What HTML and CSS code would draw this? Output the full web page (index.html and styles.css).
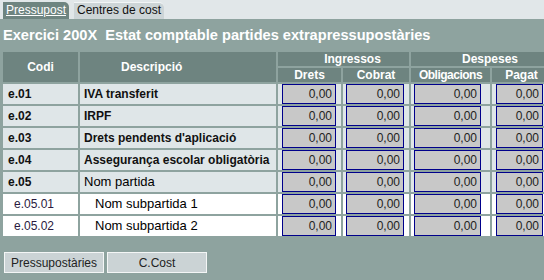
FILE: index.html
```html
<!DOCTYPE html>
<html lang="ca">
<head>
    <meta charset="UTF-8">
    <meta name="viewport" content="width=device-width, initial-scale=1.0">
    <title>Partides extrapressupostàries</title>
    <link rel="stylesheet" href="styles.css">
</head>
<body>
    <div class="tabbar">
        <span class="tab tab-active"><u>Pressupost</u></span>
        <span class="tab tab-other">Centres de cost</span>
    </div>
    <div class="main">
        <h1 class="title">Exercici 200X&nbsp; Estat comptable partides extrapressupostàries</h1>
        <table class="grid">
            <colgroup>
                <col class="c-codi">
                <col class="c-desc">
                <col class="c-drets">
                <col class="c-cobrat">
                <col class="c-oblig">
                <col class="c-pagat">
            </colgroup>
            <thead>
                <tr class="hrow">
                    <th rowspan="2">Codi</th>
                    <th rowspan="2" class="h-desc">Descripció</th>
                    <th colspan="2" class="h-group">Ingressos</th>
                    <th colspan="2" class="h-group">Despeses</th>
                </tr>
                <tr class="hrow">
                    <th>Drets</th>
                    <th>Cobrat</th>
                    <th class="h-oblig">Obligacions</th>
                    <th>Pagat</th>
                </tr>
            </thead>
            <tbody>
                <tr class="partida">
                    <td class="codi">e.01</td>
                    <td class="desc">IVA transferit</td>
                    <td><input class="amt amt-drets" value="0,00" readonly></td>
                    <td><input class="amt amt-cobrat" value="0,00" readonly></td>
                    <td><input class="amt amt-oblig" value="0,00" readonly></td>
                    <td><input class="amt amt-pagat" value="0,00" readonly></td>
                </tr>
                <tr class="partida">
                    <td class="codi">e.02</td>
                    <td class="desc">IRPF</td>
                    <td><input class="amt amt-drets" value="0,00" readonly></td>
                    <td><input class="amt amt-cobrat" value="0,00" readonly></td>
                    <td><input class="amt amt-oblig" value="0,00" readonly></td>
                    <td><input class="amt amt-pagat" value="0,00" readonly></td>
                </tr>
                <tr class="partida">
                    <td class="codi">e.03</td>
                    <td class="desc">Drets pendents d'aplicació</td>
                    <td><input class="amt amt-drets" value="0,00" readonly></td>
                    <td><input class="amt amt-cobrat" value="0,00" readonly></td>
                    <td><input class="amt amt-oblig" value="0,00" readonly></td>
                    <td><input class="amt amt-pagat" value="0,00" readonly></td>
                </tr>
                <tr class="partida">
                    <td class="codi">e.04</td>
                    <td class="desc">Assegurança escolar obligatòria</td>
                    <td><input class="amt amt-drets" value="0,00" readonly></td>
                    <td><input class="amt amt-cobrat" value="0,00" readonly></td>
                    <td><input class="amt amt-oblig" value="0,00" readonly></td>
                    <td><input class="amt amt-pagat" value="0,00" readonly></td>
                </tr>
                <tr class="partida">
                    <td class="codi">e.05</td>
                    <td class="desc desc-nom">Nom partida</td>
                    <td><input class="amt amt-drets" value="0,00" readonly></td>
                    <td><input class="amt amt-cobrat" value="0,00" readonly></td>
                    <td><input class="amt amt-oblig" value="0,00" readonly></td>
                    <td><input class="amt amt-pagat" value="0,00" readonly></td>
                </tr>
                <tr class="subpartida">
                    <td class="codi">e.05.01</td>
                    <td class="desc">Nom subpartida 1</td>
                    <td><input class="amt amt-drets" value="0,00" readonly></td>
                    <td><input class="amt amt-cobrat" value="0,00" readonly></td>
                    <td><input class="amt amt-oblig" value="0,00" readonly></td>
                    <td><input class="amt amt-pagat" value="0,00" readonly></td>
                </tr>
                <tr class="subpartida">
                    <td class="codi">e.05.02</td>
                    <td class="desc">Nom subpartida 2</td>
                    <td><input class="amt amt-drets" value="0,00" readonly></td>
                    <td><input class="amt amt-cobrat" value="0,00" readonly></td>
                    <td><input class="amt amt-oblig" value="0,00" readonly></td>
                    <td><input class="amt amt-pagat" value="0,00" readonly></td>
                </tr>
            </tbody>
        </table>
        <div class="actions">
            <button class="btn">Pressupostàries</button>
            <button class="btn">C.Cost</button>
        </div>
    </div>
</body>
</html>
```

FILE: styles.css
```css
html {
    background-color: #8ea39f;
}

body {
    margin: 0;
    padding: 0;
    font-family: "Liberation Sans", Arial, sans-serif;
    font-size: 12px;
    overflow: hidden;
    height: 280px;
}

/* pestanyes */
.tabbar {
    display: flex;
    gap: 5px;
    height: 17px;
    padding: 2px 0 0 3px;
    background-color: #e1e7e9;
}

.tab {
    display: block;
    height: 17px;
    border-top-right-radius: 5px;
    line-height: 16px;
    font-size: 12px;
    text-align: center;
    box-sizing: border-box;
}

.tab-active {
    width: 66px;
    background-color: #6e8480;
    color: #ffffff;
}

.tab-other {
    width: 90px;
    background-color: #cdd5d7;
    border-top: 1px solid #f2f5f6;
    line-height: 15px;
    color: #111111;
}

.main {
    padding: 8px 0 0 0;
}

.title {
    margin: 0 0 6px 3px;
    font-size: 14.6px;
    line-height: 17px;
    font-weight: bold;
    color: #ffffff;
    white-space: nowrap;
}

/* taula */
.grid {
    table-layout: fixed;
    width: 552px;
    margin-left: 1px;
    border-spacing: 2px;
    border-collapse: separate;
    font-size: 12px;
}

.c-codi { width: 75px; }
.c-desc { width: 196px; }
.c-drets { width: 63px; }
.c-cobrat { width: 66px; }
.c-oblig { width: 79px; }
.c-pagat { width: 59px; }

.grid th {
    height: 14px;
    padding: 0;
    background-color: #6e8480;
    color: #ffffff;
    font-size: 12px;
    line-height: 14px;
    font-weight: bold;
    text-align: center;
    white-space: nowrap;
    overflow: hidden;
}

.grid th.h-desc {
    text-align: left;
    padding-left: 41px;
}

.grid th.h-group {
    padding-left: 18px;
}

.grid th.h-oblig {
    letter-spacing: -0.5px;
}

.grid td {
    height: 20px;
    padding: 0;
    font-size: 12px;
    line-height: 14px;
    vertical-align: middle;
    white-space: nowrap;
    overflow: hidden;
}

.partida td {
    background-color: #dfe6e8;
    color: #111111;
    font-weight: bold;
}

.subpartida td {
    background-color: #ffffff;
    color: #000000;
}

.grid td.codi {
    padding-left: 5px;
}

.grid td.desc {
    padding-left: 4px;
}

.partida td.desc-nom {
    font-weight: normal;
    font-size: 13px;
    color: #000000;
}

.subpartida td.codi {
    padding-left: 11px;
    color: #2a1a40;
}

.subpartida td.desc {
    padding-left: 15px;
    font-size: 13px;
}

.amt {
    display: block;
    box-sizing: border-box;
    height: 20px;
    margin: 0;
    padding: 0 3px 0 0;
    border: 1px solid #00008b;
    background-color: #c8c8c8;
    color: #222222;
    font-family: "Liberation Sans", Arial, sans-serif;
    font-size: 12px;
    font-weight: normal;
    text-align: right;
    outline: none;
}

.amt-drets { width: 54px; margin-left: 4px; }
.amt-cobrat { width: 58px; margin-left: 3px; }
.amt-oblig { width: 67px; margin-left: 3px; }
.amt-pagat { width: 47px; margin-left: 4px; }

/* botons */
.actions {
    display: flex;
    gap: 3px;
    margin: 14px 0 0 4px;
}

.btn {
    width: 100px;
    height: 21px;
    padding: 0;
    border: 1px solid #f4f6f6;
    background-color: #cbd3d5;
    color: #222222;
    font-family: "Liberation Sans", Arial, sans-serif;
    font-size: 12px;
    cursor: pointer;
}
```
